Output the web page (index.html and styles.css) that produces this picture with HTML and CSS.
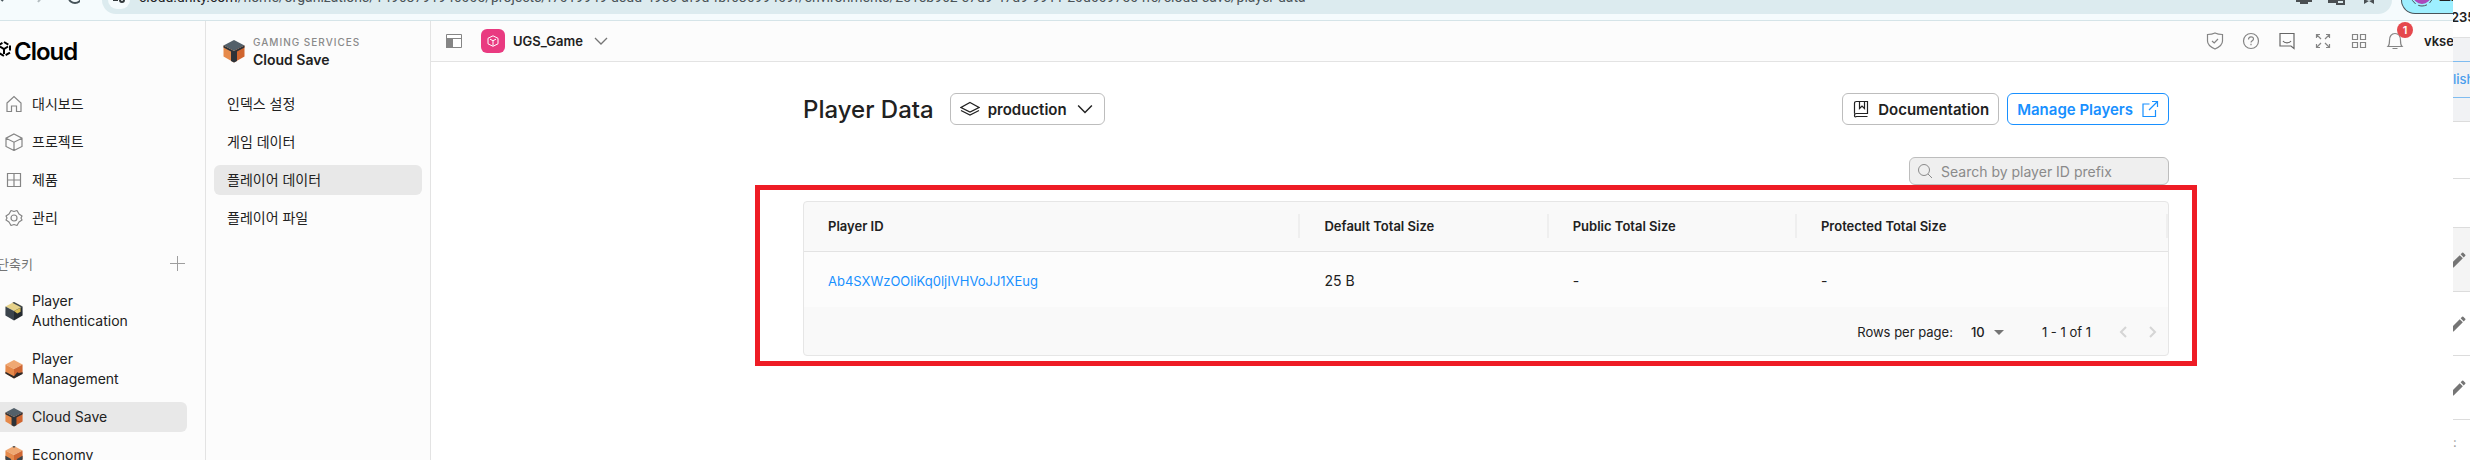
FILE: index.html
```html
<!DOCTYPE html>
<html lang="ko">
<head>
  <meta charset="UTF-8">
  <title>Player Data</title>
  <link rel="stylesheet" href="styles.css">
</head>
<body>
  <svg class="defs" width="0" height="0">
    <!-- orange cube with a dark lid -->
    <symbol id="cube-save" viewBox="0 0 22 24">
      <path d="M11 1 21.500 6.500 11 12 .5 6.500z" fill="#53606a"/>
      <path d="M.5 6.500 11 12v11.500L.5 17.500z" fill="#e68a4b"/>
      <path d="M21.500 6.500 11 12v11.500l10.500-6z" fill="#d0652f"/>
      <path d="M.5 6.500 11 12l10.500-5.500v2L14 12.500v9.500l-3 1.500-3-1.500v-9.500L.5 8.500z" fill="#2c3238"/>
    </symbol>
    <symbol id="chevron" viewBox="0 0 14 14">
      <path d="M1 4l6 6 6-6" fill="none" stroke="currentColor" stroke-width="1.300"/>
    </symbol>
    <symbol id="pencil" viewBox="0 0 24 24">
      <path d="M3 17.250V21h3.750L17.810 9.940l-3.750-3.750L3 17.250zM20.710 7.040a1 1 0 0 0 0-1.410l-2.340-2.340a1 1 0 0 0-1.410 0l-1.830 1.830 3.750 3.750 1.830-1.830z" fill="#757575"/>
    </symbol>
  </svg>

  <div class="screen">
    <div class="window">
      <div class="browser">
        <div class="browser-buttons">
          <svg width="80" height="14" viewBox="0 0 80 14" fill="none" stroke="#47545a" stroke-width="2">
            <path d="M-1-3l4 4"/>
            <path d="M42-3l-4 5" stroke="#b4bdc1"/>
            <path d="M69-2a6 5 0 0 0 12 0"/>
          </svg>
        </div>
        <div class="address">
          <span class="site-info">
            <svg width="14" height="6" viewBox="0 0 14 6" fill="none" stroke="#33393c" stroke-width="2"><path d="M1 0h5"/><circle cx="10" cy="0" r="2"/></svg>
          </span>
          <span class="url"><b>cloud.unity.com</b>/home/organizations/14968791946005/projects/f7019949-dedd-4980-af9d-fbf68699409f/environments/251eb962-e7d9-47d9-9911-20d0097504fc/cloud-save/player-data</span>
          <svg class="address-icons" width="80" height="6" viewBox="0 0 80 6" fill="#4a4f52">
            <path d="M0 0h16v2h-4v2H4V2H0zM32 0h8v3h-8z"/>
            <path d="M41 0h7v4h-7z" fill="none" stroke="#4a4f52" stroke-width="2"/>
            <path d="M68 4V0h2l3 1 3-1h2v4l-5-3z"/>
          </svg>
        </div>
        <div class="profile">
          <svg width="22" height="8" viewBox="0 0 22 8"><circle cx="11" cy="-5" r="9" fill="#ab47bc"/><circle cx="11" cy="-5" r="11" fill="none" stroke="#47545a" stroke-width="1" stroke-dasharray="9 3"/></svg>
          <span>프로</span>
        </div>
      </div>

      <div class="app">
        <nav class="sidebar">
          <a class="logo" href="#">
            <svg width="16" height="16" viewBox="0 0 16 16" fill="none" stroke="#000" stroke-width="2"><path d="M8 1l6 3.500v7L8 15l-6-3.500v-7z" stroke-dasharray="5 2"/><path d="M4 5.500L8 8l4-2.500M8 8v5"/></svg>
            <span>Cloud</span>
          </a>
          <a class="nav-item" href="#">
            <svg width="18" height="18" viewBox="0 0 18 18"><path d="M2 8l7-6.500L16 8v8.500h-4.500V11h-5v5.500H2z"/></svg>
            대시보드
          </a>
          <a class="nav-item" href="#">
            <svg width="18" height="18" viewBox="0 0 18 18"><path d="M9 1l8 4.200v8.300L9 17.500l-8-4V5.200zM1 5.200l8 4 8-4M9 9.200v8.300"/></svg>
            프로젝트
          </a>
          <a class="nav-item" href="#">
            <svg width="18" height="18" viewBox="0 0 18 18"><path d="M2.500 2.500h13v13h-13zM9 2.500v13M2.500 9h13"/></svg>
            제품
          </a>
          <a class="nav-item" href="#">
            <svg width="18" height="18" viewBox="0 0 18 18"><circle cx="9" cy="9" r="3"/><path d="M6 1.500l3 1 3-1L14 5l3 2-1 2 1 2-3 2-2 3.500-3-1-3 1L4 13l-3-2 1-2-1-2 3-2z" stroke-linejoin="round"/></svg>
            관리
          </a>
          <div class="shortcuts">
            <span>단축키</span>
            <button type="button" aria-label="추가">
              <svg width="16" height="16" viewBox="0 0 16 16" stroke="#9e9e9e" stroke-width="1"><path d="M8.500 1v15M1 8.500h15"/></svg>
            </button>
          </div>
          <a class="nav-item" href="#">
            <svg class="cube" width="18" height="20" viewBox="0 0 22 24"><path d="M11 1l10.500 5.500L11 12 .5 6.500z" fill="#e6d28a"/><path d="M.5 6.500L11 12v11.500l-10.500-6z" fill="#3b444c"/><path d="M21.500 6.500L11 12v11.500l10.500-6z" fill="#252b30"/><path d="M11 12l8-4v5l-4 2z" fill="#d9bd55"/><path d="M11 1l10.500 5.500-2 1L9 2z" fill="#3b444c"/></svg>
            <span>Player<br>Authentication</span>
          </a>
          <a class="nav-item" href="#">
            <svg class="cube" width="18" height="20" viewBox="0 0 22 24"><path d="M11 1l10.500 5.500L11 12 .5 6.500z" fill="#efa873"/><path d="M.5 6.500L11 12v11.500l-10.500-6z" fill="#e68a4b"/><path d="M21.500 6.500L11 12v11.500l10.500-6z" fill="#cf6733"/><path d="M.5 15.500L11 21l4-5 2 1 4.500-1v2L11 23.500l-10.500-6z" fill="#2c2a2a"/></svg>
            <span>Player<br>Management</span>
          </a>
          <a class="nav-item active" href="#">
            <svg class="cube" width="18" height="20"><use href="#cube-save"/></svg>
            Cloud Save
          </a>
          <a class="nav-item" href="#">
            <svg class="cube" width="18" height="20" viewBox="0 0 22 24"><path d="M11 1l10.500 5.500L11 12 .5 6.500z" fill="#efa873"/><path d="M.5 6.500L11 12v11.500l-10.500-6z" fill="#e68a4b"/><path d="M21.500 6.500L11 12v11.500l10.500-6z" fill="#cf6733"/><path d="M.5 13l7 4v5l-7-4.500zM21.500 13l-7 4v5l7-4.500zM9 2l2-1 2 1-2 1z" fill="#3b444c"/></svg>
            Economy
          </a>
        </nav>

        <nav class="submenu">
          <div class="service">
            <svg width="22" height="24"><use href="#cube-save"/></svg>
            <div>
              <div class="service-group">GAMING SERVICES</div>
              <div class="service-name">Cloud Save</div>
            </div>
          </div>
          <a class="sub-item" href="#">인덱스 설정</a>
          <a class="sub-item" href="#">게임 데이터</a>
          <a class="sub-item active" href="#">플레이어 데이터</a>
          <a class="sub-item" href="#">플레이어 파일</a>
        </nav>

        <main class="main">
          <header class="topbar">
            <button class="panel-toggle" type="button" aria-label="Toggle panel">
              <svg width="18" height="16" viewBox="0 0 18 16"><path d="M1.500 1.500h15v13h-15z" fill="#fff" stroke="#858585"/><path d="M1 5.500h16M7.500 5v9" stroke="#858585"/><path d="M1 5h6v10H1z" fill="#858585"/></svg>
            </button>
            <button class="project" type="button">
              <span class="project-icon">
                <svg width="12" height="12" viewBox="0 0 12 12" fill="none" stroke="#fff"><path d="M6 .8l5 2.500v5.500l-5 2.500-5-2.500V3.300zM3 4.200l3 1.500 3-1.500M6 5.700v5"/></svg>
              </span>
              UGS_Game
              <svg class="project-chevron" width="14" height="14"><use href="#chevron"/></svg>
            </button>
            <div class="tools">
              <svg width="18" height="18" viewBox="0 0 18 18"><path d="M1.500 2.500C4 2.500 7 2 9 1c2 1 5 1.500 7.500 1.500V9c0 4-4 6.500-7.500 8-3.500-1.500-7.500-4-7.500-8zM6 9l2.200 2L12 7"/></svg>
              <svg width="18" height="18" viewBox="0 0 18 18"><circle cx="9" cy="9" r="7.500"/><path d="M6.500 7.500C6.500 4 11.500 4 11.500 7c0 1.800-2.500 1.700-2.500 3.500M9 11.800v1.400"/></svg>
              <svg width="18" height="18" viewBox="0 0 18 18"><path d="M2 1.500h14v15l-3-2.500H2zM5 9c1.500 2.500 6.500 2.500 8 0" stroke="#666"/></svg>
              <svg width="18" height="18" viewBox="0 0 18 18"><path d="M2.500 6V2.500H6M2.500 2.500L7 7M12 2.500h3.500V6M15.500 2.500L11 7M2.500 12v3.500H6M2.500 15.500L7 11M12 15.500h3.500V12M15.500 15.500L11 11"/></svg>
              <svg width="18" height="18" viewBox="0 0 18 18"><path d="M2.500 2.500h5v5h-5zM10.500 2.500h5v5h-5zM2.500 10.500h5v5h-5zM10.500 10.500h5v5h-5z"/></svg>
              <span class="bell">
                <svg width="18" height="18" viewBox="0 0 18 18"><path d="M2 14.500c1.500-1.500 1.500-3 1.500-6C3.500 4.500 5.500 1.500 9 1.500s5.500 3 5.500 7c0 3 0 4.500 1.500 6zM6.500 16.500h5"/></svg>
                <span class="badge">1</span>
              </span>
              <span class="user">vksekf</span>
            </div>
          </header>

          <div class="content">
            <div class="title-row">
              <h1>Player Data</h1>
              <button class="btn" type="button">
                <svg width="20" height="16" viewBox="0 0 20 16"><path d="M10 1.500l9 5-9 4.500-9-4.500zM1 9.500l9 4.500 9-4.500"/></svg>
                production
                <svg class="env-chevron" width="16" height="16"><use href="#chevron"/></svg>
              </button>
              <div class="actions">
                <a class="btn" href="#">
                  <svg width="18" height="18" viewBox="0 0 18 18"><path d="M2.500 13.500v-10q0-2 2-2h11v12h-11q-2 0-2 2t2 1h11M7.500 1.500v7L10 6l2.500 2.500v-7"/></svg>
                  Documentation
                </a>
                <a class="btn btn-blue" href="#">
                  Manage Players
                  <svg width="18" height="18" viewBox="0 0 18 18"><path d="M8.500 4H2v12.500h12.500V10M11 1.500h5.500V7M16 2L8 10"/></svg>
                </a>
              </div>
            </div>

            <label class="search">
              <svg width="16" height="16" viewBox="0 0 16 16"><circle cx="7" cy="7" r="5.500"/><path d="M11 11l4 4"/></svg>
              <input type="text" placeholder="Search by player ID prefix" aria-label="Search by player ID prefix">
            </label>

            <div class="table-box">
              <table>
                <thead>
                  <tr>
                    <th class="col-id">Player ID</th>
                    <th class="col-size">Default Total Size</th>
                    <th class="col-size">Public Total Size</th>
                    <th>Protected Total Size</th>
                  </tr>
                </thead>
                <tbody>
                  <tr>
                    <td><a href="#">Ab4SXWzOOliKq0ljIVHVoJJ1XEug</a></td>
                    <td>25 B</td>
                    <td>-</td>
                    <td>-</td>
                  </tr>
                </tbody>
              </table>
              <div class="pager">
                <label for="rows">Rows per page:</label>
                <span class="rows">
                  <select id="rows"><option>10</option><option>25</option></select>
                  <svg width="10" height="5" viewBox="0 0 10 5"><path d="M0 0h10L5 5z" fill="#757575"/></svg>
                </span>
                <span class="range">1 - 1 of 1</span>
                <button type="button" aria-label="Previous page" disabled><svg width="8" height="12" viewBox="0 0 8 12"><path d="M7 1L2 6l5 5"/></svg></button>
                <button type="button" aria-label="Next page" disabled><svg width="8" height="12" viewBox="0 0 8 12"><path d="M1 1l5 5-5 5"/></svg></button>
              </div>
              <div class="highlight"></div>
            </div>
          </div>
        </main>
      </div>
    </div>

    <!-- edge of the window behind -->
    <aside class="behind">
      <div class="behind-title">235</div>
      <div class="behind-bar"><a href="#">lish</a></div>
      <div class="behind-row short"></div>
      <div class="behind-row tall"></div>
      <div class="behind-row shaded"><svg width="20" height="20"><use href="#pencil"/></svg></div>
      <div class="behind-row"><svg width="20" height="20"><use href="#pencil"/></svg></div>
      <div class="behind-row"><svg width="20" height="20"><use href="#pencil"/></svg></div>
      <div class="behind-more">:</div>
    </aside>
  </div>
</body>
</html>
```
FILE: styles.css
```css
* {
  box-sizing: border-box;
}

body {
  margin: 0;
  font-family: Inter, "Noto Sans CJK KR", sans-serif;
  font-size: 13px;
  color: #212121;
  background-color: #fff;
}

a {
  color: inherit;
  text-decoration: none;
}

button {
  font: inherit;
  color: inherit;
  padding: 0;
  border: none;
  background: none;
  cursor: pointer;
}

svg {
  display: block;
  flex: none;
}

.defs {
  position: absolute;
}

.screen {
  display: flex;
  height: 100vh;
  overflow: hidden;
}

.window {
  flex: 1;
  min-width: 0;
  display: flex;
  flex-direction: column;
  overflow: hidden;
}

/* browser strip */
.browser {
  display: flex;
  flex: none;
  height: 21px;
  background-color: #f5fbfd;
  border-bottom: 1px solid #d5e4e8;
  overflow: hidden;
}

.browser-buttons {
  width: 102px;
}

.address {
  flex: 1;
  display: flex;
  height: 14px;
  padding-left: 6px;
  background-color: #dcebef;
  border-radius: 0 0 20px 20px;
}

.site-info {
  display: flex;
  justify-content: center;
  width: 22px;
  height: 9px;
  margin-right: 9px;
  background-color: #f5fbfd;
  border-radius: 0 0 11px 11px;
}

.url {
  font-family: Roboto, sans-serif;
  font-size: 14px;
  line-height: 20px;
  margin-top: -13px;
  color: #4a5357;
  white-space: nowrap;
}

.url b {
  font-weight: 400;
  color: #1f2426;
}

.address-icons {
  margin-left: auto;
  margin-right: 16px;
}

.profile {
  display: flex;
  width: 70px;
  height: 14px;
  margin-left: 9px;
  margin-right: -18px;
  padding-left: 9px;
  gap: 6px;
  background-color: #9eefff;
  border: 1px solid #47545a;
  border-top: none;
  border-radius: 0 0 0 16px;
}

.profile span {
  margin-top: -14px;
}

.app {
  flex: 1;
  display: flex;
  min-height: 0;
}

/* left menu */
.sidebar {
  flex: none;
  width: 206px;
  background-color: #fcfcfc;
  border-right: 1px solid #e3e3e3;
  overflow: hidden;
}

.logo {
  display: flex;
  align-items: center;
  gap: 2px;
  height: 60px;
  margin-left: -4px;
  margin-bottom: 8px;
  color: #000;
}

.logo span {
  font-size: 24px;
  font-weight: 600;
  letter-spacing: -1px;
}

.logo svg {
  margin-bottom: 4px;
}

.nav-item {
  display: flex;
  align-items: center;
  gap: 9px;
  min-height: 30px;
  margin: 0 18px 8px 0;
  padding: 5px;
  font-size: 14px;
  line-height: 20px;
  border-radius: 0 6px 6px 0;
}

.nav-item svg:not(.cube) {
  fill: none;
  stroke: #858585;
  stroke-width: 1.2;
}

.cube {
  margin: -2px 0;
}

.active {
  background-color: #e8e8e8;
}

.shortcuts {
  display: flex;
  align-items: center;
  justify-content: space-between;
  height: 30px;
  margin: 15px 20px 8px -3px;
  color: #757575;
}

/* second menu */
.submenu {
  flex: none;
  width: 225px;
  padding: 0 8px;
  background-color: #fcfcfc;
  border-right: 1px solid #e3e3e3;
}

.service {
  display: flex;
  align-items: center;
  gap: 8px;
  height: 60px;
  margin-bottom: 8px;
  padding-left: 9px;
}

.service-group {
  font-size: 10px;
  font-weight: 500;
  line-height: 18px;
  letter-spacing: 1px;
  color: #8a8a8a;
}

.service-name {
  font-size: 14px;
  font-weight: 600;
  line-height: 18px;
}

.sub-item {
  display: block;
  margin-bottom: 8px;
  padding: 5px 13px;
  font-size: 14px;
  line-height: 20px;
  border-radius: 6px;
}

/* main area */
.main {
  flex: 1;
  min-width: 0;
}

.topbar {
  display: flex;
  align-items: center;
  height: 41px;
  padding-left: 14px;
  background-color: #fcfcfc;
  border-bottom: 1px solid #e3e3e3;
}

.project {
  display: flex;
  align-items: center;
  gap: 8px;
  margin-left: 18px;
  font-weight: 600;
}

.project-icon {
  display: flex;
  align-items: center;
  justify-content: center;
  width: 24px;
  height: 24px;
  background-color: #e93a80;
  border-radius: 6px;
}

.project-chevron {
  margin-left: 3px;
  color: #757575;
}

.tools {
  display: flex;
  align-items: center;
  gap: 18px;
  width: 247px;
  margin-left: auto;
  overflow: hidden;
  height: 40px;
}

.tools svg {
  fill: none;
  stroke: #858585;
  stroke-width: 1.2;
}

.bell {
  position: relative;
}

.badge {
  position: absolute;
  top: -10px;
  left: 11px;
  width: 16px;
  height: 16px;
  font-size: 11px;
  font-weight: 600;
  line-height: 16px;
  text-align: center;
  color: #fff;
  background-color: #e5484d;
  border-radius: 50%;
}

.user {
  margin-left: 2px;
  font-weight: 600;
}

.content {
  padding: 31px 284px 0 372px;
}

.title-row {
  display: flex;
  align-items: center;
  height: 32px;
}

h1 {
  margin: 0 16px 0 0;
  font-size: 24px;
  font-weight: 500;
}

.btn {
  display: flex;
  align-items: center;
  gap: 8px;
  height: 32px;
  padding: 0 9px;
  font-size: 15px;
  font-weight: 600;
  background-color: #fff;
  border: 1px solid #bdbdbd;
  border-radius: 6px;
}

.btn svg {
  fill: none;
  stroke: currentColor;
  stroke-width: 1.2;
}

.btn-blue {
  color: #1890ff;
  border-color: #1890ff;
}

.env-chevron {
  margin: 0 2px;
}

.actions {
  display: flex;
  gap: 8px;
  margin-left: auto;
}

.search {
  display: flex;
  align-items: center;
  gap: 8px;
  width: 260px;
  height: 28px;
  margin: 32px 0 16px auto;
  padding: 0 7px;
  background-color: #efefef;
  border: 1px solid #bdbdbd;
  border-radius: 6px;
}

.search svg {
  fill: none;
  stroke: #8a8a8a;
}

.search input {
  flex: 1;
  min-width: 0;
  padding: 0;
  font: inherit;
  font-size: 14px;
  border: none;
  outline: none;
  background: none;
}

.search input::placeholder {
  color: #8a8a8a;
}

.table-box {
  position: relative;
  background-color: #f9f9f9;
  border: 1px solid #e6e6e6;
  border-radius: 4px;
}

table {
  width: 100%;
  table-layout: fixed;
  border-collapse: collapse;
}

th {
  height: 49px;
  padding: 0 24px;
  font-weight: 600;
  text-align: left;
  border-bottom: 1px solid #e3e3e3;
  background: linear-gradient(#efefef, #efefef) right center / 2px 24px no-repeat;
}

.col-id {
  width: 36.4%;
}

.col-size {
  width: 18.2%;
}

td {
  height: 56px;
  padding: 2px 24px 0;
  font-size: 14px;
  background-color: #fcfcfc;
}

td a {
  font-size: 13px;
  color: #1890ff;
}

.pager {
  display: flex;
  align-items: center;
  height: 48px;
  padding: 2px 11px 0 0;
}

.rows {
  display: flex;
  align-items: center;
  gap: 6px;
  margin: 0 38px 0 18px;
}

.rows select {
  padding: 0;
  font: inherit;
  font-weight: 500;
  color: inherit;
  border: none;
  background: none;
  appearance: none;
}

.pager label {
  margin-left: auto;
}

.range {
  margin-right: 28px;
}

.pager button + button {
  margin-left: 22px;
}

.pager button svg {
  fill: none;
  stroke: #d5d5d5;
  stroke-width: 2;
}

/* red frame drawn over the table */
.highlight {
  position: absolute;
  top: -17px;
  right: -29px;
  bottom: -11px;
  left: -49px;
  border: 5px solid #ee1c25;
  pointer-events: none;
}

/* strip of the window behind */
.behind {
  flex: none;
  width: 17px;
  overflow: hidden;
  background-color: #fff;
}

.behind-title {
  height: 37px;
  padding-top: 9px;
  line-height: 16px;
  font-weight: 600;
  text-indent: -2px;
}

.behind-bar {
  padding: 23px 0;
  background-color: #f1f2f4;
  border-top: 1px solid #e0e0e0;
  border-bottom: 1px solid #dcdcdc;
}

.behind-bar a {
  display: block;
  height: 37px;
  line-height: 35px;
  font-weight: 500;
  color: #4a9eed;
  border-top: 1px solid #7fbcf0;
  border-bottom: 1px solid #7fbcf0;
}

.behind-row {
  display: flex;
  align-items: center;
  height: 64px;
  border-bottom: 1px solid #dcdcdc;
}

.behind-row svg {
  margin-left: -5px;
}

.behind-row.short {
  height: 57px;
}

.behind-row.tall {
  height: 49px;
}

.shaded {
  background-color: #f4f4f4;
}

.behind-more {
  padding-top: 14px;
  color: #9e9e9e;
}
```
